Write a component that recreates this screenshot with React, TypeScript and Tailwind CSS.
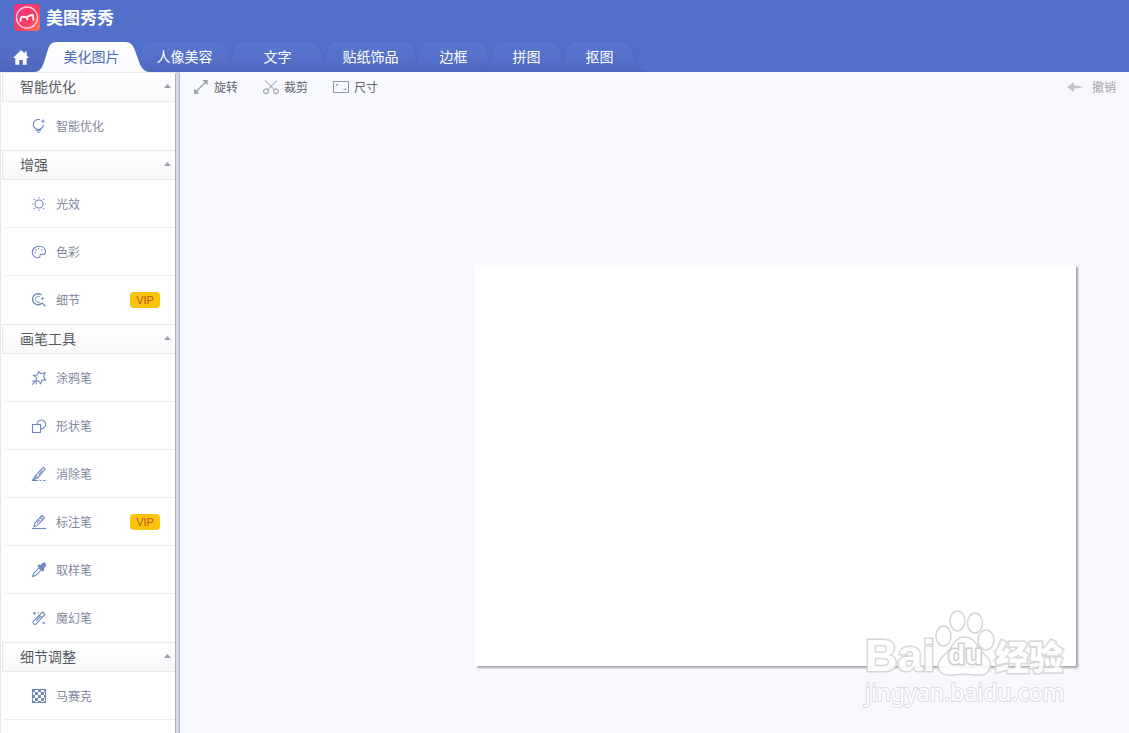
import { useState } from "react";
import type { ReactNode } from "react";

type Tool = { name: string; icon: ReactNode; vip?: boolean };
type Group = { title: string; tools: Tool[] };

const groups: Group[] = [
  {
    title: "智能优化",
    tools: [
      {
        name: "智能优化",
        icon: (
          <>
            <path d="M9 1.8A5 5 0 1 0 12.3 6.5M5.6 10.6v1.200h3.6v-1.200" />
            <path d="M4.800 12.800h5.200M6.200 14.500h2.400" />
            <path d="M12 1.6v3.2M10.4 3.2h3.2" />
          </>
        ),
      },
    ],
  },
  {
    title: "增强",
    tools: [
      {
        name: "光效",
        icon: (
          <>
            <circle cx="8" cy="8" r="4" />
            <path d="M8 1v1.3M8 13.7V15M1 8h1.3M13.7 8H15M3 3l.9.9M12.1 12.1l.9.9M3 13l.9-.9M12.1 3.9L13 3" />
          </>
        ),
      },
    {
        name: "色彩",
        icon: (
          <>
            <path d="M8 2.2C4 2.2 1.3 5 1.3 8.2c0 3 2.3 5.6 5.9 5.6 1.9 0 1.7-1 1.7-1.9 0-1.3 1-1.7 2.3-1.5 2 .4 3.4-.5 3.4-2.6 0-3.300-2.800-5.600-6.600-5.600z" />
            <path d="M3.800 8.700h1.200M4.300 6h1.200M7 4.700h1.200M10.200 5.600h1.200" strokeWidth="1.300" />
          </>
        ),
      },
      {
        name: "细节",
        vip: true,
        icon: (
          <>
            <path d="M10.500 3A5.500 5.500 0 1 0 11 11M10.800 10.600l3.600 3.600" strokeWidth="1.300" />
            <path d="M8.800 4.700a3 3 0 1 0 0 5.200M11.600 5v3.200M10.200 6.600h2.800" strokeWidth="0.900" />
          </>
        ),
      },
    ],
  },
  {
    title: "画笔工具",
    tools: [
      {
        name: "涂鸦笔",
        icon: (
          <>
            <path d="M7.700 1.500l1.800 2.200 4.500-1-1.300 4 1.900 3.300-3.500.1-1.400 3.600-2.100-2.900-2.800.5.800-3.200-3-2.700 3.700-.4z" />
            <path d="M5.300 10.400L1.200 14.700M3.600 10.800l-2.200.6M5.400 12.400l-.4 2" />
          </>
        ),
      },
      {
        name: "形状笔",
        icon: (
          <>
            <path d="M1.500 6.500h8v8h-8z" />
            <path d="M6.100 6.300a4.300 4.300 0 1 1 3.600 4.300" />
          </>
        ),
      },
      {
        name: "消除笔",
        icon: (
          <>
            <path d="M12.200 1.300l2 1.800-7.600 9-4.900 1.900L4.600 9.500zM4.600 9.500l2.400 2.200M3.500 11l2 1.800M11.200 4.500L7.500 9" />
            <path d="M1 14.500h6M8.500 14.500h2M12 14.500h2.500" />
          </>
        ),
      },
      {
        name: "标注笔",
        vip: true,
        icon: (
          <>
            <path d="M11 1.400l2.500 2.300-7 7.700-3.500 1.200.9-3.600zM9.200 3.500l2.400 2.200M8.700 6L6 9" />
            <path d="M1 14.500h14" />
          </>
        ),
      },
      {
        name: "取样笔",
        icon: (
          <>
            <path d="M8 5.800l-5.100 5.300-1.400 3.400 3.500-1.300 5.200-5.100z" />
            <path
              d="M7.200 3.800l1.200-.8 1.700.6 1.600-2 1.900-.4 1 1.100-.4 2-1.800 1.600.5 1.500-1 1.400z"
              fill="currentColor"
            />
          </>
        ),
      },
      {
        name: "魔幻笔",
        icon: (
          <>
            <path d="M11.500 2l2.500 2.500-8.700 9.100c-.8.800-2 .8-2.800 0s-.8-1.900 0-2.700zM8.600 5.200l2.400 2.400M9.800 5.800l-4.600 4.800" />
            <path d="M3.500 1.800v3M2 3.300h3M12.700 11.800v2.400M11.500 13h2.400M7.300 2v1.200" />
          </>
        ),
      },
    ],
  },
  {
    title: "细节调整",
    tools: [
      {
        name: "马赛克",
        icon: (
          <>
            <path d="M1.500 1.500h13v13h-13z" />
            <path
              stroke="none"
              fill="currentColor"
              d="M1 1h3v3h3V1h3v3h3V1h2v3h-2v3h2v3h-2v3h2v2h-2v-2h-3v2H7v-2H4v2H1v-2h3v-3H1V7h3V4H1zM4 7v3h3V7zM7 4v3h3V4zM10 7v3h3V7zM7 10v3h3v-3z"
              fillRule="evenodd"
            />
          </>
        ),
      },
    ],
  },
];

const tabs = [
  { name: "美化图片", wide: true },
  { name: "人像美容", wide: true },
  { name: "文字", wide: true },
  { name: "贴纸饰品", wide: true },
  { name: "边框", wide: false },
  { name: "拼图", wide: false },
  { name: "抠图", wide: false },
];

function tabShape(width: number) {
  const r = width + 10;
  return `M0 30C7 29 8 23 11 14C14 5 14 0 22 0H${r - 13}C${r - 5} 0 ${r - 4} 6 ${r - 1} 14C${r + 2} 24 ${r + 5} 30 ${r + 12} 30Z`;
}

function TabBackground({ active, wide }: { active: boolean; wide: boolean }) {
  const w = wide ? 93 : 73;
  return (
    <svg
      className="pointer-events-none absolute top-0 -left-2.5"
      width={w + 23}
      height="30"
      aria-hidden="true"
    >
      <defs>
        <linearGradient id="tabFill" x1="0" y1="0" x2="0" y2="1">
          <stop offset="0" stopColor="#5a78d0" />
          <stop offset="1" stopColor="#4f69c0" />
        </linearGradient>
        <linearGradient id="tabActive" x1="0" y1="0" x2="0" y2="1">
          <stop offset="0" stopColor="#ffffff" />
          <stop offset="1" stopColor="#f8fafe" />
        </linearGradient>
      </defs>
      <path
        d={tabShape(w)}
        fill={active ? "url(#tabActive)" : "url(#tabFill)"}
        stroke={active ? "none" : "#4964b8"}
        strokeOpacity="0.55"
      />
    </svg>
  );
}

function Header({ tab, onTab }: { tab: string; onTab: (t: string) => void }) {
  return (
    <header className="bg-[#5170c9]">
      <div className="flex h-[42px] items-start gap-1.5 pt-1 pl-3.5">
        <svg width="26" height="27" viewBox="0 0 26 27" aria-hidden="true">
          <defs>
            <linearGradient id="logo" x1="0" y1="0" x2="1" y2="1">
              <stop offset="0" stopColor="#f52f87" />
              <stop offset="0.6" stopColor="#fb3e60" />
              <stop offset="1" stopColor="#ff7857" />
            </linearGradient>
          </defs>
          <rect width="26" height="27" rx="4" fill="url(#logo)" />
          <circle cx="13" cy="13.500" r="10.500" fill="none" stroke="#ffd3dd" strokeWidth="1.300" />
          <path
            d="M6.500 17c.1-3 .7-4.700 2.200-4.400l2.200.5c1.200.2 2 0 3.200-.6 1.600-.8 3.300-1.700 4.500-1.500 1 .2.200 2.500.9 5M13 13.500l.5 2"
            fill="none"
            stroke="#fff"
            strokeWidth="1.800"
            strokeLinecap="round"
          />
        </svg>
        <h1 className="text-[17px] leading-[26px] font-bold text-white">美图秀秀</h1>
      </div>
      <nav className="flex h-[30px]" aria-label="功能">
        <button
          type="button"
          aria-label="首页"
          className="relative flex w-[45px] items-center bg-linear-to-b from-[#5572c8] to-[#4d66bb] pl-3"
        >
          <svg width="18" height="17" viewBox="0 0 18 17" fill="#fff" aria-hidden="true">
            <path d="M9 1L1 9h2.300v6.800h4V11h3.400v4.800h4V9H17l-2.300-2.400V2.400h-2V4.600z" />
          </svg>
        </button>
        {tabs.map((t) => {
          const active = t.name === tab;
          return (
            <button
              key={t.name}
              type="button"
              aria-pressed={active}
              onClick={() => onTab(t.name)}
              className={`relative pb-0.5 text-sm leading-7 ${t.wide ? "w-[93px]" : "w-[73px]"} ${
                active ? "z-10 text-[#476cb7]" : "text-white"
              }`}
            >
              <TabBackground active={active} wide={t.wide} />
              <span className="relative">{t.name}</span>
            </button>
          );
        })}
      </nav>
    </header>
  );
}

function Sidebar() {
  const [closed, setClosed] = useState<string[]>([]);
  const toggle = (title: string) =>
    setClosed((c) => (c.includes(title) ? c.filter((x) => x !== title) : [...c, title]));
  return (
    <aside className="w-[175px] shrink-0 border-l border-[#e6e8ee] bg-white pl-px">
      {groups.map((g) => {
        const open = !closed.includes(g.title);
        return (
          <section key={g.title} className="group">
            <button
              type="button"
              aria-expanded={open}
              onClick={() => toggle(g.title)}
              className="flex h-[30px] w-full items-center justify-between border-y border-l border-[#e9eaec] bg-linear-to-b from-white to-[#f8f8f8] pr-1 pb-0.5 pl-[17px] text-sm text-[#565a65]"
            >
              {g.title}
              <svg width="7" height="4" className={open ? "" : "rotate-180"} aria-hidden="true">
                <path d="M0 4L3.500 0L7 4z" fill="#9b9fab" />
              </svg>
            </button>
            {open && (
              <ul>
                {g.tools.map((t) => (
                  <li
                    key={t.name}
                    className="ml-0.5 border-b border-[#ebedf0] last:border-transparent group-last:last:border-[#ebedf0]"
                  >
                    <button
                      type="button"
                      className="flex h-[47px] w-full items-center gap-[9px] pr-[15px] pl-[27px] text-xs text-[#7f889c]"
                    >
                      <svg
                        width="16"
                        height="16"
                        viewBox="0 0 16 16"
                        fill="none"
                        stroke="currentColor"
                        strokeWidth="1.100"
                        className="text-[#6f86bf]"
                        aria-hidden="true"
                      >
                        {t.icon}
                      </svg>
                      {t.name}
                      {t.vip && (
                        <span className="ml-auto w-[30px] rounded-[4px] bg-[#fcc30b] text-center font-['Liberation_Sans',sans-serif] text-[11px] leading-4 text-[#b8581c]">
                          VIP
                        </span>
                      )}
                    </button>
                  </li>
                ))}
              </ul>
            )}
          </section>
        );
      })}
    </aside>
  );
}

function Toolbar() {
  const item = "flex items-center gap-1 text-xs text-[#5f6470]";
  return (
    <div className="flex h-[30px] items-center gap-6 pr-[13px] pl-3">
      <button type="button" className={item}>
        <svg width="18" height="16" viewBox="0 0 18 16" fill="none" stroke="#9a9ea8" strokeWidth="1.300" aria-hidden="true">
          <path d="M3.500 13L14 2.800" />
          <path d="M10.300 1h5.400v5.200zM2.100 9.500v5.200h5.300z" fill="#9a9ea8" stroke="none" />
        </svg>
        旋转
      </button>
      <button type="button" className={item}>
        <svg width="18" height="16" viewBox="0 0 18 16" fill="none" stroke="#8d929d" aria-hidden="true">
          <circle cx="4" cy="12.300" r="2.500" />
          <circle cx="14" cy="12.300" r="2.500" />
          <path d="M3 1.500l9.300 9.100M15 1.500L5.700 10.600" />
        </svg>
        裁剪
      </button>
      <button type="button" className={item}>
        <svg width="18" height="16" viewBox="0 0 18 16" fill="none" stroke="#8e96a8" aria-hidden="true">
          <path d="M1.500 2.500h15v11h-15zM4.500 7V5.500h2M13.500 9v1.500h-2" />
        </svg>
        尺寸
      </button>
      <button type="button" className="ml-auto flex items-center gap-2 text-xs text-[#a2a4aa]">
        <svg width="17" height="12" viewBox="0 0 17 12" fill="#c3c4c8" aria-hidden="true">
          <path d="M0 6l7-5v3.500h2.500L17 6 9.500 7.500H7V11z" />
        </svg>
        撤销
      </button>
    </div>
  );
}

function Watermark() {
  return (
    <div className="pointer-events-none absolute right-[61px] bottom-[26px] w-[203px] text-white opacity-90">
      <div className="flex h-[68px] items-end">
        <span className="font-['Liberation_Sans',sans-serif] text-[45px] leading-[42px] font-bold [-webkit-text-stroke:3px_#d3d4d7] [paint-order:stroke_fill]">
          Bai
        </span>
        <div className="relative h-[68px] w-[60px]">
          <svg width="60" height="68" viewBox="0 0 60 68" fill="#fff" stroke="#d0d1d4" strokeWidth="1.500" aria-hidden="true">
            <ellipse cx="8.500" cy="27" rx="7.500" ry="10" />
            <ellipse cx="22.500" cy="12" rx="7.500" ry="10" />
            <ellipse cx="40" cy="14" rx="7.500" ry="10" />
            <ellipse cx="51" cy="31" rx="8" ry="10" />
            <path d="M29.500 28c7 0 10 4 15 12 5 7 12 9 11 17-1 8-8 10-14 9-8-1-16-1-23 0S3 65 3 57c0-7 7-11 12-17 4-6 7-12 14.500-12z" />
          </svg>
          <span className="absolute bottom-2 left-[13px] font-['Liberation_Sans',sans-serif] text-[28px] leading-7 font-bold [-webkit-text-stroke:3px_#c6c7ca] [paint-order:stroke_fill]">
            du
          </span>
        </div>
        <span className="text-[34px] leading-[42px] font-black [-webkit-text-stroke:3px_#d3d4d7] [paint-order:stroke_fill]">
          经验
        </span>
      </div>
      <div className="font-['Noto_Sans',sans-serif] text-[23px] leading-[30px] [-webkit-text-stroke:2px_#d9dbe0] [paint-order:stroke_fill]">
        jingyan.baidu.com
      </div>
    </div>
  );
}

export default function App() {
  const [tab, setTab] = useState("美化图片");
  return (
    <div className="relative flex min-h-screen flex-col overflow-hidden bg-[#f8f9fe] font-['Noto_Sans_CJK_SC',sans-serif]">
      <Header tab={tab} onTab={setTab} />
      <div className="flex flex-1">
        <Sidebar />
        <div className="w-[5px] shrink-0 rounded-t-sm border-x border-[#a9b0c4] bg-[#d3d9e8]" />
        <main className="min-w-0 flex-1">
          <Toolbar />
          <div className="flex justify-end pt-[163px] pr-[53px]">
            <div className="h-[401px] w-[601px] bg-white shadow-[2px_2px_2px_rgba(0,0,0,0.35)]" />
          </div>
        </main>
      </div>
      <Watermark />
    </div>
  );
}
